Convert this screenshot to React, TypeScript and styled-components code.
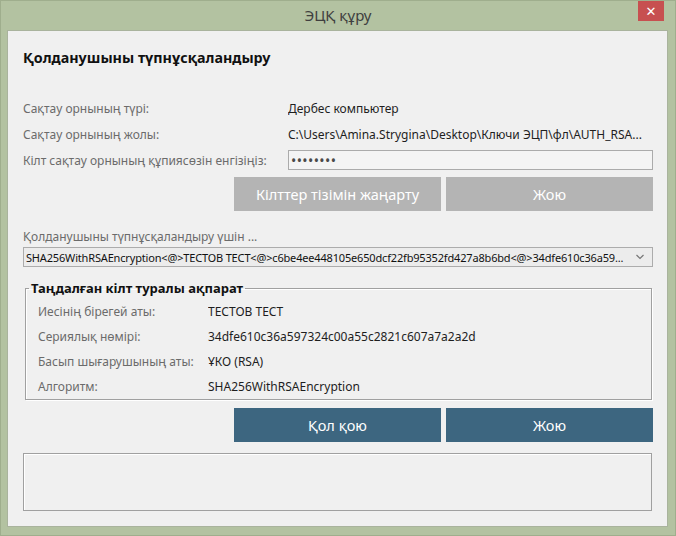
import React from 'react';
import styled, { createGlobalStyle } from 'styled-components';

const GlobalStyle = createGlobalStyle`
  html, body {
    margin: 0;
    padding: 0;
    background: #b3c2a1;
  }
  body {
    font-family: "Noto Sans", "DejaVu Sans", sans-serif;
  }
`;

const Window = styled.div`
  width: 676px;
  height: 536px;
  box-sizing: border-box;
  background: #b3c2a1;
  border: 1px solid #9fae8d;
  display: flex;
  flex-direction: column;
`;

const TitleBar = styled.div`
  height: 29px;
  display: grid;
  grid-template-columns: 1fr auto 1fr;
  align-items: start;
`;

const TitleText = styled.div`
  grid-column: 2;
  font-size: 15px;
  line-height: 29px;
  color: #3f3f3f;
`;

const CloseButton = styled.div`
  grid-column: 3;
  justify-self: end;
  margin-right: 11px;
  width: 26px;
  height: 20px;
  background: #c75050;
  color: #fff;
  font-size: 13px;
  font-weight: bold;
  line-height: 20px;
  text-align: center;
`;

const Client = styled.div`
  flex: 1;
  margin: 0 7px 8px 6px;
  background: #f0f0f0;
  border: 1px solid #a9b39d;
  padding: 0 14px 0 15px;
  display: flex;
  flex-direction: column;
`;

const Heading = styled.h1`
  margin: 17px 0 0;
  font-size: 14.3px;
  line-height: 20px;
  font-weight: bold;
  color: #111;
`;

const InfoGrid = styled.div`
  margin-top: 27px;
  display: grid;
  grid-template-columns: 265px 1fr;
  grid-auto-rows: 26px;
  align-items: center;
`;

const Label = styled.div`
  font-size: 12px;
  color: #6b6b6b;
  white-space: nowrap;
`;

const Value = styled.div`
  font-size: 12px;
  color: #1e1e1e;
  white-space: nowrap;
  overflow: hidden;
`;

const PasswordBox = styled.div`
  height: 20px;
  box-sizing: border-box;
  border: 1px solid #ababab;
  background: #f4f4f4;
  display: flex;
  align-items: center;
  padding-left: 2px;
  font-size: 14px;
  letter-spacing: 0.4px;
  color: #4a4a4a;
`;

const ButtonRow = styled.div<{ $top: number }>`
  margin-top: ${p => p.$top}px;
  display: grid;
  grid-template-columns: 207px 207px;
  gap: 5px;
  justify-content: end;
`;

const ActionButton = styled.div<{ $variant: 'disabled' | 'primary' }>`
  height: 34px;
  background: ${p => (p.$variant === 'primary' ? '#3d6680' : '#b4b4b4')};
  color: #fff;
  font-size: 14.5px;
  display: flex;
  align-items: center;
  justify-content: center;
`;

const Caption = styled.div`
  margin-top: 18px;
  height: 16px;
  line-height: 16px;
  font-size: 12px;
  color: #6b6b6b;
`;

const Select = styled.div`
  margin-top: 2px;
  height: 20px;
  box-sizing: border-box;
  border: 1px solid #acacac;
  background: #ececec;
  display: flex;
  align-items: center;
  padding: 0 8px 0 2px;
  gap: 6px;
`;

const SelectText = styled.div`
  flex: 1;
  font-size: 11px;
  letter-spacing: -0.17px;
  color: #111;
  white-space: nowrap;
  overflow: hidden;
`;

const Chevron = styled.svg`
  width: 8px;
  height: 6px;
  flex: none;
`;

const GroupBox = styled.fieldset`
  margin: 12px 1px 0 2px;
  padding: 2px 0 0 12px;
  border: 1px solid #a0a0a0;
  box-shadow: inset 1px 1px 0 #fff, 1px 1px 0 #fff;
  min-width: 0;
`;

const Legend = styled.legend`
  margin-left: -9px;
  padding: 0 2px;
  font-size: 13px;
  font-weight: bold;
  color: #111;
`;

const GroupGrid = styled.div`
  display: grid;
  grid-template-columns: 170px 1fr;
  grid-auto-rows: 25px;
  align-items: center;
`;

const OutputBox = styled.div`
  margin: 11px 1px 0 0;
  height: 58px;
  box-sizing: border-box;
  border: 1px solid #a0a0a0;
  box-shadow: inset 1px 1px 0 #fff;
`;

export default function App() {
  return (
    <>
      <GlobalStyle />
      <Window>
        <TitleBar>
          <TitleText>ЭЦҚ құру</TitleText>
          <CloseButton>✕</CloseButton>
        </TitleBar>
        <Client>
          <Heading>Қолданушыны түпнұсқаландыру</Heading>
          <InfoGrid>
            <Label>Сақтау орнының түрі:</Label>
            <Value>Дербес компьютер</Value>
            <Label>Сақтау орнының жолы:</Label>
            <Value>C:\Users\Amina.Strygina\Desktop\Ключи ЭЦП\фл\AUTH_RSA...</Value>
            <Label>Кілт сақтау орнының құпиясөзін енгізіңіз:</Label>
            <PasswordBox>••••••••</PasswordBox>
          </InfoGrid>
          <ButtonRow $top={4}>
            <ActionButton $variant="disabled">Кілттер тізімін жаңарту</ActionButton>
            <ActionButton $variant="disabled">Жою</ActionButton>
          </ButtonRow>
          <Caption>Қолданушыны түпнұсқаландыру үшін ...</Caption>
          <Select>
            <SelectText>
              SHA256WithRSAEncryption&lt;@&gt;ТЕСТОВ ТЕСТ&lt;@&gt;c6be4ee448105e650dcf22fb95352fd427a8b6bd&lt;@&gt;34dfe610c36a59...
            </SelectText>
            <Chevron viewBox="0 0 8 6">
              <path d="M0.5 1 L4 4.5 L7.5 1" fill="none" stroke="#777" strokeWidth="1.2" />
            </Chevron>
          </Select>
          <GroupBox>
            <Legend>Таңдалған кілт туралы ақпарат</Legend>
            <GroupGrid>
              <Label>Иесінің бірегей аты:</Label>
              <Value>ТЕСТОВ ТЕСТ</Value>
              <Label>Сериялық нөмірі:</Label>
              <Value>34dfe610c36a597324c00a55c2821c607a7a2a2d</Value>
              <Label>Басып шығарушының аты:</Label>
              <Value>ҰКО (RSA)</Value>
              <Label>Алгоритм:</Label>
              <Value>SHA256WithRSAEncryption</Value>
            </GroupGrid>
          </GroupBox>
          <ButtonRow $top={8}>
            <ActionButton $variant="primary">Қол қою</ActionButton>
            <ActionButton $variant="primary">Жою</ActionButton>
          </ButtonRow>
          <OutputBox />
        </Client>
      </Window>
    </>
  );
}
